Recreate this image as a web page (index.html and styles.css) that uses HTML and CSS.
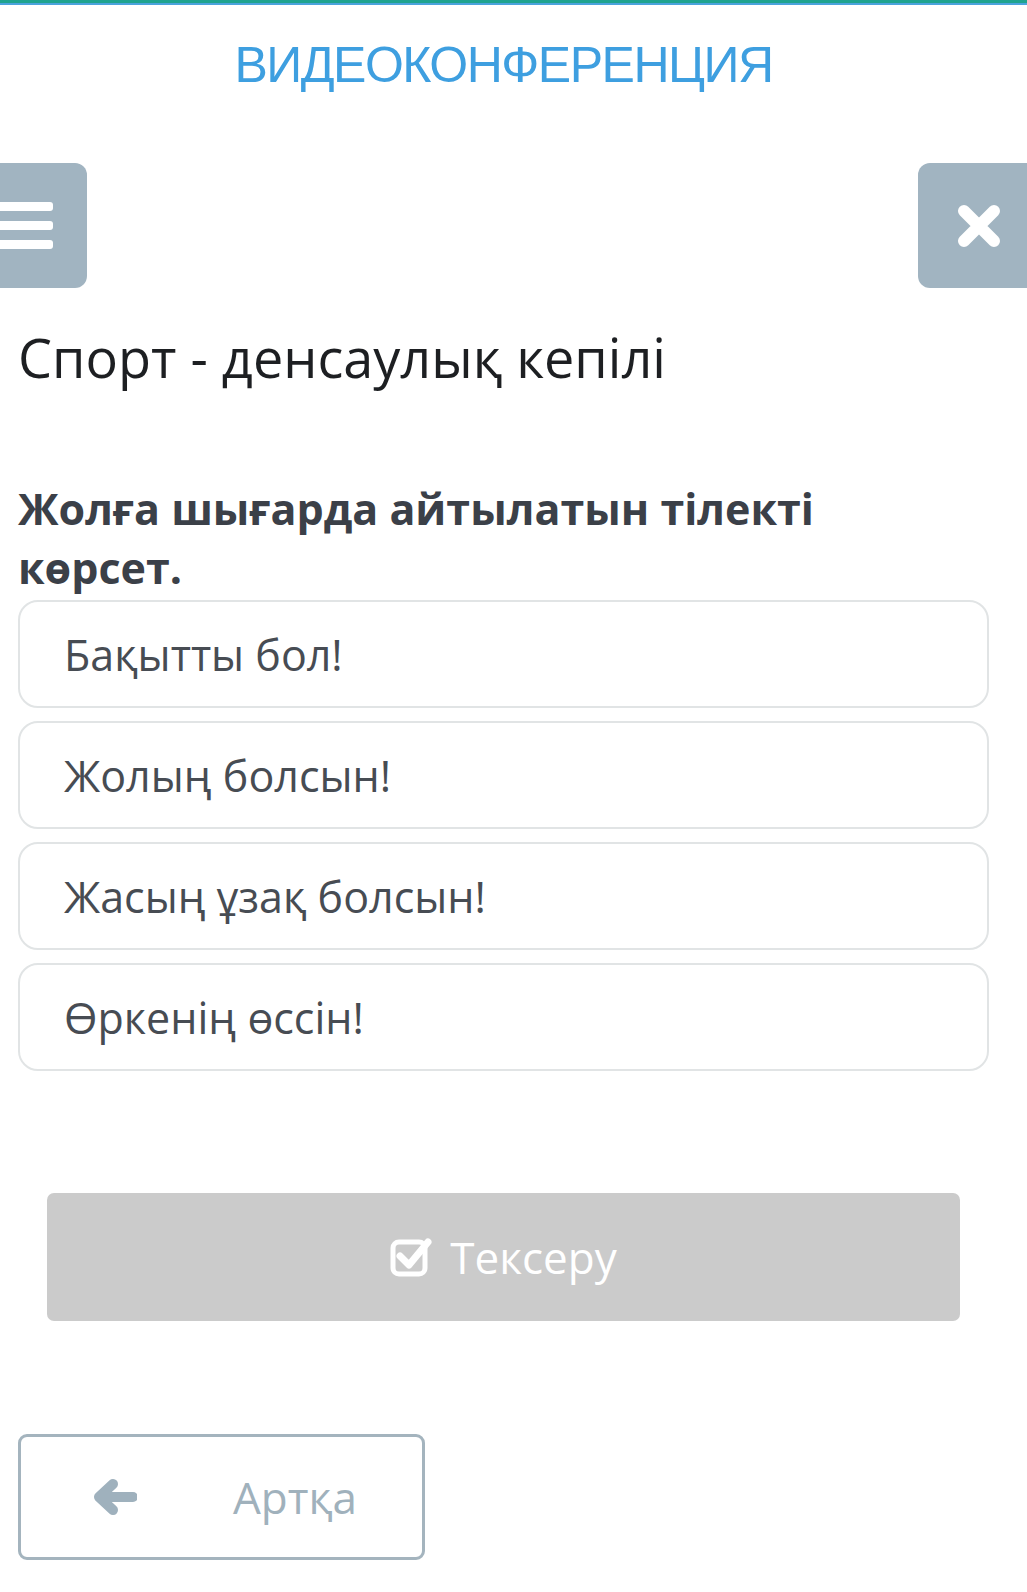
FILE: index.html
```html
<!DOCTYPE html>
<html lang="kk">
<head>
<meta charset="utf-8">
<title>Спорт - денсаулық кепілі</title>
<link rel="stylesheet" href="styles.css">
</head>
<body>
<div class="topbar"></div>
<header class="brand">ВИДЕОКОНФЕРЕНЦИЯ</header>
<div class="toolbar">
  <button class="tool tool-menu" aria-label="Меню">
    <span class="bars"><span></span><span></span><span></span></span>
  </button>
  <button class="tool tool-close" aria-label="Жабу">
    <svg width="46" height="46" viewBox="0 0 46 46"><path d="M8 8 L38 38 M38 8 L8 38" stroke="#fff" stroke-width="12" stroke-linecap="round"/></svg>
  </button>
</div>
<h1 class="title">Спорт - денсаулық кепілі</h1>
<main class="quiz">
  <h2 class="question">Жолға шығарда айтылатын тілекті көрсет.</h2>
  <div class="options">
    <div class="option">Бақытты бол!</div>
    <div class="option">Жолың болсын!</div>
    <div class="option">Жасың ұзақ болсын!</div>
    <div class="option">Өркенің өссін!</div>
  </div>
  <div class="check-wrap">
    <button class="check">
      <svg width="42" height="42" viewBox="0 0 42 42"><rect x="3" y="6" width="32" height="32" rx="6" fill="none" stroke="#fff" stroke-width="5"/><path d="M10 20 L19 29 L38 6" fill="none" stroke="#fff" stroke-width="7" stroke-linecap="round" stroke-linejoin="round"/></svg>
      <span>Тексеру</span>
    </button>
  </div>
  <button class="back">
    <svg width="44" height="36" viewBox="0 0 44 36"><path d="M40 18 H8 M20 5 L6 18 L20 31" fill="none" stroke="#9fb1bd" stroke-width="10" stroke-linecap="round" stroke-linejoin="round"/></svg>
    <span>Артқа</span>
  </button>
</main>
</body>
</html>
```
FILE: styles.css
```css
html, body {
  margin: 0;
  padding: 0;
  background: #fff;
  overflow: hidden;
}
body {
  font-family: "Open Sans", "Noto Sans", sans-serif;
  width: 1027px;
}
.topbar {
  height: 3px;
  background: #1fa38f;
  border-bottom: 2px solid #4aa3dc;
}
.brand {
  font-family: "Liberation Sans", Arial, sans-serif;
  font-size: 50px;
  letter-spacing: -1.5px;
  color: #3e9fe0;
  text-align: center;
  padding-right: 20px;
  margin-top: 32px;
  line-height: 56px;
}
.toolbar {
  display: flex;
  justify-content: space-between;
  margin-top: 70px;
}
.tool {
  border: 0;
  background: #a1b4c1;
  height: 125px;
  padding: 0;
  display: flex;
  align-items: center;
}
.tool-menu {
  width: 87px;
  border-radius: 0 12px 12px 0;
  justify-content: flex-start;
}
.bars {
  display: flex;
  flex-direction: column;
  gap: 10px;
}
.bars span {
  display: block;
  width: 53px;
  height: 9px;
  background: #fff;
  border-radius: 0 3px 3px 0;
}
.tool-close {
  width: 109px;
  border-radius: 12px 0 0 12px;
  justify-content: flex-start;
  padding-left: 38px;
}
.title {
  font-weight: 400;
  font-size: 54px;
  color: #1d1f22;
  margin: 34px 0 0 18px;
  line-height: 70px;
}
.quiz {
  padding: 0 38px 0 18px;
}
.question {
  font-weight: 700;
  font-size: 43px;
  line-height: 59px;
  color: #3b4048;
  margin: 87px 0 0 0;
  padding-right: 20px;
}
.options {
  display: flex;
  flex-direction: column;
  gap: 13px;
  margin-top: 3px;
}
.option {
  height: 104px;
  border: 2px solid #e1e4e5;
  border-radius: 20px;
  display: flex;
  align-items: center;
  padding-left: 44px;
  font-size: 43px;
  color: #474c53;
}
.check-wrap {
  padding: 0 29px 0 29px;
  margin-top: 122px;
}
.check {
  width: 100%;
  height: 128px;
  border: 0;
  border-radius: 7px;
  background: #cbcbcb;
  color: #fff;
  font-family: inherit;
  font-size: 44px;
  display: flex;
  align-items: center;
  justify-content: center;
  gap: 18px;
}
.back {
  margin-top: 113px;
  width: 407px;
  height: 126px;
  border: 3px solid #a4b4be;
  border-radius: 9px;
  background: #fff;
  display: flex;
  align-items: center;
  padding: 0 0 0 72px;
  gap: 96px;
  font-family: inherit;
  font-size: 44px;
  color: #a0b1bc;
}
```
